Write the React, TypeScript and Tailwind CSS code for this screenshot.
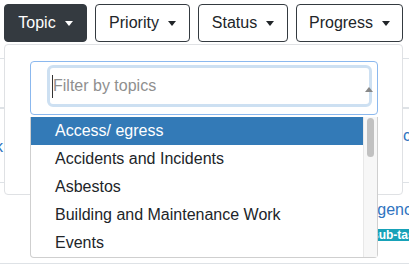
import { useState } from 'react';

const topics = [
  'Access/ egress',
  'Accidents and Incidents',
  'Asbestos',
  'Building and Maintenance Work',
  'Events',
];

function Caret() {
  return (
    <span className="ml-[9px] inline-block h-0 w-0 border-x-[4px] border-t-[5px] border-x-transparent border-t-current" />
  );
}

interface FilterButtonProps {
  label: string;
  width: string;
  active?: boolean;
}

function FilterButton({ label, width, active }: FilterButtonProps) {
  return (
    <button
      className={`flex h-[38px] items-center justify-center rounded-[4px] border border-[#343a40] text-[16px] ${width} ${
        active ? 'bg-[#343a40] text-white' : 'bg-white text-[#212529]'
      }`}
    >
      <span>{label}</span>
      <Caret />
    </button>
  );
}

export default function App() {
  const [selected] = useState(0);

  return (
    <div className="relative h-[264px] w-[409px] overflow-hidden bg-white font-['Liberation_Sans',Arial,sans-serif]">
      {/* filter buttons */}
      <div className="flex gap-2 pl-1 pt-1">
        <FilterButton label="Topic" width="w-[83px]" active />
        <FilterButton label="Priority" width="w-[95px]" />
        <FilterButton label="Status" width="w-[90px]" />
        <FilterButton label="Progress" width="w-[107px]" />
      </div>

      {/* table behind the menu */}
      <div className="text-[16px] text-[#2f74c0]">
        <div className="h-[17px] border-b border-[#dee2e6]" />
        <div className="h-[50px] border-b-2 border-[#dee2e6]" />
        <div className="flex h-[74px] border-b border-[#dee2e6]">
          <span className="-ml-[5px] mt-[26px]">k</span>
          <span className="ml-auto mt-[15px] w-[6px] overflow-hidden">cc</span>
        </div>
        <div className="h-[66px] border-b border-[#dee2e6] pl-[363px]">
          <div className="mt-[15px] whitespace-nowrap">ergency</div>
          <div className="ml-[5px] mt-[5px] inline-block whitespace-nowrap rounded-[3px] bg-[#17a2b8] px-[4px] text-[12px] leading-[12px] font-bold text-white">
            sub-task
          </div>
        </div>
        <div className="h-[20px] w-[216px] border-r border-[#dee2e6]" />
      </div>

      {/* topic dropdown menu */}
      <div className="absolute left-[4px] top-[44px] h-[151px] w-[399px] rounded-[4px] border border-[#dfe1e4] bg-white">
        <div className="relative ml-[25px] mt-[16px] h-[54px] w-[348px] rounded-[4px] border border-[#8bb8ee] pl-[16px] pt-[3px]">
          <div className="flex h-[42px] w-[325px] items-center rounded-[6px] border-[3px] border-[#cde0f2] bg-white pl-[2px]">
            <span className="h-[23px] border-l border-[#333]" />
            <span className="text-[16px] text-[#8f8f8f]">Filter by topics</span>
          </div>
          <span className="absolute left-[334px] top-[25px] h-0 w-0 border-x-[4px] border-b-[5px] border-x-transparent border-b-[#888]" />
        </div>
      </div>

      {/* options list */}
      <div className="absolute left-[30px] top-[117px] flex h-[141px] w-[348px] rounded-b-[4px] border-x border-b border-[#cfcfcf] bg-white">
        <ul className="flex-1">
          {topics.map((t, i) => (
            <li
              key={t}
              className={`flex h-[28px] items-center pl-[24px] text-[16px] ${
                i === selected ? 'bg-[#337ab7] text-white' : 'text-[#212529]'
              }`}
            >
              {t}
            </li>
          ))}
        </ul>
        <div className="w-[14px] border-l border-[#e8e8e8] bg-[#f7f7f7] px-[3px] pt-[1px]">
          <div className="h-[39px] rounded-full bg-[#c1c1c1]" />
        </div>
      </div>
    </div>
  );
}
